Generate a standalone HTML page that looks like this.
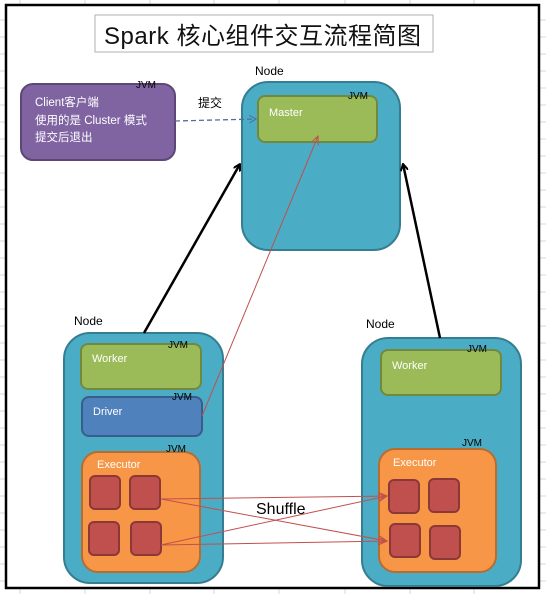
<!DOCTYPE html>
<html><head><meta charset="utf-8"><style>
html,body{margin:0;padding:0;background:#fff;}
svg{display:block;}
text{font-family:"Liberation Sans","Noto Sans CJK SC",sans-serif;}
</style></head><body>
<svg width="546" height="594" viewBox="0 0 546 594" xmlns="http://www.w3.org/2000/svg">
<defs>
<marker id="ab" markerWidth="8" markerHeight="8" refX="7" refY="4" orient="auto" markerUnits="userSpaceOnUse"><path d="M0,0 L7,4 L0,8" fill="none" stroke="#000" stroke-width="2"/></marker>
<marker id="ar" markerWidth="10" markerHeight="8" refX="9" refY="4" orient="auto" markerUnits="userSpaceOnUse"><path d="M0,0 L9,4 L0,8" fill="none" stroke="#c0504d" stroke-width="1"/></marker>
<marker id="ad" markerWidth="8" markerHeight="8" refX="7" refY="4" orient="auto" markerUnits="userSpaceOnUse"><path d="M0,0 L7,4 L0,8" fill="none" stroke="#4f6fa0" stroke-width="1"/></marker>
</defs>
<!-- grid -->
<g stroke="#d0d7e5" stroke-width="1">
<line x1="20" y1="0" x2="20" y2="594"/><line x1="85" y1="0" x2="85" y2="594"/><line x1="150" y1="0" x2="150" y2="594"/><line x1="214" y1="0" x2="214" y2="594"/><line x1="279" y1="0" x2="279" y2="594"/><line x1="345" y1="0" x2="345" y2="594"/><line x1="410" y1="0" x2="410" y2="594"/><line x1="474" y1="0" x2="474" y2="594"/>
<line x1="0" y1="20" x2="546" y2="20"/><line x1="0" y1="37" x2="546" y2="37"/><line x1="0" y1="54" x2="546" y2="54"/><line x1="0" y1="71" x2="546" y2="71"/><line x1="0" y1="88" x2="546" y2="88"/><line x1="0" y1="105" x2="546" y2="105"/><line x1="0" y1="122" x2="546" y2="122"/><line x1="0" y1="139" x2="546" y2="139"/><line x1="0" y1="156" x2="546" y2="156"/><line x1="0" y1="173" x2="546" y2="173"/><line x1="0" y1="190" x2="546" y2="190"/><line x1="0" y1="207" x2="546" y2="207"/><line x1="0" y1="224" x2="546" y2="224"/><line x1="0" y1="241" x2="546" y2="241"/><line x1="0" y1="258" x2="546" y2="258"/><line x1="0" y1="275" x2="546" y2="275"/><line x1="0" y1="292" x2="546" y2="292"/><line x1="0" y1="309" x2="546" y2="309"/><line x1="0" y1="326" x2="546" y2="326"/><line x1="0" y1="343" x2="546" y2="343"/><line x1="0" y1="360" x2="546" y2="360"/><line x1="0" y1="377" x2="546" y2="377"/><line x1="0" y1="394" x2="546" y2="394"/><line x1="0" y1="411" x2="546" y2="411"/><line x1="0" y1="428" x2="546" y2="428"/><line x1="0" y1="445" x2="546" y2="445"/><line x1="0" y1="462" x2="546" y2="462"/><line x1="0" y1="479" x2="546" y2="479"/><line x1="0" y1="496" x2="546" y2="496"/><line x1="0" y1="513" x2="546" y2="513"/><line x1="0" y1="530" x2="546" y2="530"/><line x1="0" y1="547" x2="546" y2="547"/><line x1="0" y1="564" x2="546" y2="564"/><line x1="0" y1="581" x2="546" y2="581"/>
</g>
<rect x="6" y="5" width="533" height="583" fill="#fff" stroke="#000" stroke-width="2.5"/>
<!-- title -->
<rect x="95" y="15" width="338" height="37" fill="#fff" stroke="#b0b0b0" stroke-width="1"/>
<text x="104" y="44" font-size="24" fill="#111" textLength="317" lengthAdjust="spacing">Spark  核心组件交互流程简图</text>
<!-- client -->
<rect x="21" y="84" width="154" height="76" rx="12" fill="#8064a2" stroke="#5c4776" stroke-width="2"/>
<text x="35" y="106" font-size="11.5" fill="#fff">Client客户端</text>
<text x="35" y="124" font-size="11.5" fill="#fff">使用的是 Cluster 模式</text>
<text x="35" y="141" font-size="11.5" fill="#fff">提交后退出</text>
<text x="136" y="88" font-size="10" fill="#000">JVM</text>
<text x="198" y="107" font-size="12" fill="#000">提交</text>
<!-- master node -->
<text x="255" y="75" font-size="12" fill="#000">Node</text>
<rect x="242" y="82" width="158" height="168" rx="26" fill="#4bacc6" stroke="#357d91" stroke-width="2"/>
<rect x="258" y="96" width="119" height="46" rx="7" fill="#9bbb59" stroke="#71893f" stroke-width="2"/>
<text x="269" y="116" font-size="11" fill="#fff">Master</text>
<text x="348" y="99" font-size="10" fill="#000">JVM</text>
<line x1="175" y1="121" x2="256" y2="119" stroke="#4f6fa0" stroke-width="1.3" stroke-dasharray="5,3" marker-end="url(#ad)"/>
<!-- left node -->
<text x="74" y="325" font-size="12" fill="#000">Node</text>
<rect x="64" y="333" width="159" height="250" rx="26" fill="#4bacc6" stroke="#357d91" stroke-width="2"/>
<rect x="81" y="344" width="120" height="45" rx="7" fill="#9bbb59" stroke="#71893f" stroke-width="2"/>
<text x="92" y="362" font-size="11" fill="#fff">Worker</text>
<text x="168" y="348" font-size="10" fill="#000">JVM</text>
<rect x="82" y="397" width="120" height="39" rx="7" fill="#4f81bd" stroke="#385d8a" stroke-width="2"/>
<text x="93" y="415" font-size="11" fill="#fff">Driver</text>
<text x="172" y="400" font-size="10" fill="#000">JVM</text>
<rect x="82" y="452" width="118" height="120" rx="16" fill="#f79646" stroke="#b66d31" stroke-width="2"/>
<text x="97" y="468" font-size="11" fill="#fff">Executor</text>
<text x="166" y="452" font-size="10" fill="#000">JVM</text>
<g fill="#c0504d" stroke="#8c3836" stroke-width="2">
<rect x="90" y="476" width="30" height="33" rx="5"/><rect x="130" y="476" width="30" height="33" rx="5"/>
<rect x="89" y="522" width="30" height="33" rx="5"/><rect x="131" y="522" width="30" height="33" rx="5"/>
</g>
<!-- right node -->
<text x="366" y="328" font-size="12" fill="#000">Node</text>
<rect x="362" y="338" width="159" height="248" rx="26" fill="#4bacc6" stroke="#357d91" stroke-width="2"/>
<rect x="381" y="350" width="120" height="45" rx="7" fill="#9bbb59" stroke="#71893f" stroke-width="2"/>
<text x="392" y="369" font-size="11" fill="#fff">Worker</text>
<text x="467" y="352" font-size="10" fill="#000">JVM</text>
<rect x="379" y="449" width="117" height="123" rx="16" fill="#f79646" stroke="#b66d31" stroke-width="2"/>
<text x="393" y="466" font-size="11" fill="#fff">Executor</text>
<text x="462" y="446" font-size="10" fill="#000">JVM</text>
<g fill="#c0504d" stroke="#8c3836" stroke-width="2">
<rect x="389" y="480" width="30" height="33" rx="5"/><rect x="429" y="479" width="30" height="33" rx="5"/>
<rect x="390" y="524" width="30" height="33" rx="5"/><rect x="430" y="526" width="30" height="33" rx="5"/>
</g>
<!-- arrows -->
<line x1="144" y1="333" x2="240" y2="164" stroke="#000" stroke-width="2.5" marker-end="url(#ab)"/>
<line x1="440" y1="338" x2="403" y2="164" stroke="#000" stroke-width="2.5" marker-end="url(#ab)"/>
<line x1="202" y1="416" x2="318" y2="136" stroke="#c0504d" stroke-width="1" marker-end="url(#ar)"/>
<g stroke="#c0504d" stroke-width="1" fill="none">
<line x1="161" y1="499" x2="387" y2="496" marker-end="url(#ar)"/>
<line x1="161" y1="499" x2="387" y2="541" marker-end="url(#ar)"/>
<line x1="161" y1="545" x2="387" y2="496" marker-end="url(#ar)"/>
<line x1="161" y1="545" x2="387" y2="541" marker-end="url(#ar)"/>
</g>
<text x="256" y="514" font-size="16" fill="#000">Shuffle</text>
</svg>
</body></html>
